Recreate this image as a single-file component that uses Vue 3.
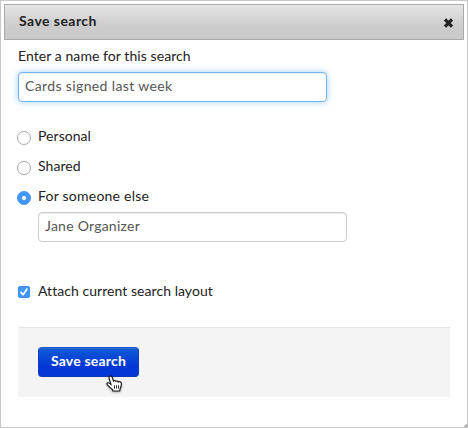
<script setup>
import { ref } from 'vue'

const searchName = ref('Cards signed last week')
const owner = ref('Jane Organizer')
const scope = ref('other')
const attachLayout = ref(true)
const scopes = [
  { value: 'personal', label: 'Personal' },
  { value: 'shared', label: 'Shared' },
  { value: 'other', label: 'For someone else' },
]
</script>

<template>
  <div class="dialog">
    <header class="titlebar">
      <span class="title">Save search</span>
      <button class="close" type="button" aria-label="Close">
        <svg width="11" height="10" viewBox="0 0 11 10">
          <path d="M2 1.4 9 8.6M9 1.4 2 8.6" stroke="#222" stroke-width="3.2" fill="none" />
        </svg>
      </button>
    </header>

    <main class="content">
      <label class="name-label" for="name">Enter a name for this search</label>
      <input id="name" v-model="searchName" class="field focused" type="text" />

      <div class="scopes">
        <label v-for="s in scopes" :key="s.value" class="option" :class="s.value">
          <input v-model="scope" type="radio" class="radio" :value="s.value" />
          <span>{{ s.label }}</span>
        </label>
      </div>
      <input v-model="owner" class="field owner" type="text" />

      <label class="attach">
        <span class="check">
          <input v-model="attachLayout" type="checkbox" class="box" />
          <svg v-if="attachLayout" class="tick" width="12" height="12" viewBox="0 0 12 12">
            <path d="M3 6.4 5.1 8.7 9 3.1" stroke="#fff" stroke-width="1.7" fill="none" stroke-linecap="round" stroke-linejoin="round" />
          </svg>
        </span>
        <span class="attach-text">Attach current search layout</span>
      </label>

      <footer class="footer">
        <button class="save" type="button">Save search</button>
        <svg class="pointer" width="17" height="18" viewBox="0 0 17 18">
          <path d="M3.5 1.6C4.5.5 5.8 1.2 6.2 2.4L7.5 6.1C8.2 5.2 9.4 5.4 9.8 6.4 10.6 5.6 11.9 5.9 12.2 7 13.2 6.2 15.2 6.8 15.3 8.4 15.5 10.5 15 12 14.2 13.5L13.8 16H6.8L6.5 14.6C5 13.5 3.2 11.8 1.2 9.6.3 8.3 1.8 7.3 3.1 8.1L5 9.4 3.2 3.6C3 2.8 3 2.1 3.5 1.6Z" fill="#fff" stroke="#111" stroke-width="1.1" />
          <path d="M8.5 10.3V13.6M10.5 10.3V13.6M12.5 10.3V13.6" stroke="#111" stroke-width=".9" />
        </svg>
      </footer>
    </main>
    <svg class="grip" width="3" height="3" viewBox="0 0 3 3">
      <path d="M2 0h1v3H0V2h1V1h1z" fill="#aaa" />
    </svg>
  </div>
</template>

<style>
body {
  background: #c9c9c9;
}
</style>

<style scoped>
.dialog,
.dialog * {
  box-sizing: border-box;
}
.dialog {
  position: relative;
  width: 468px;
  height: 428px;
  padding: 3px 3px 0;
  border: 1px solid #c8c8c8;
  border-radius: 2px;
  background: #fff;
  color: #222;
  font: 14px/20px Lato, 'Liberation Sans', sans-serif;
}
.titlebar {
  display: flex;
  align-items: center;
  justify-content: space-between;
  width: 460px;
  height: 36px;
  padding: 0 9px 0 14px;
  border: 1px solid #aaa;
  background: linear-gradient(#e4e4e4, #ccc 65%, #cacaca);
}
.title {
  margin-top: -3px;
  font-weight: 700;
  letter-spacing: 0.45px;
}
.close {
  display: flex;
  margin-top: 1px;
  padding: 0;
  border: 0;
  background: none;
}
.content {
  display: flex;
  flex-direction: column;
  align-items: flex-start;
  padding: 6px 14px 0;
}
.name-label {
  height: 26px;
  letter-spacing: 0.07px;
}
.field {
  width: 309px;
  height: 30px;
  padding: 0 6px 3px;
  border: 1px solid #ccc;
  border-radius: 4px;
  outline: 0;
  background: #fff;
  box-shadow: inset 0 1px 1px rgba(0, 0, 0, 0.075);
  color: #555;
  font: inherit;
  letter-spacing: 0.25px;
}
.focused {
  border-color: #70b4f5;
  box-shadow: inset 0 1px 1px rgba(0, 0, 0, 0.06), 0 0 7px rgba(102, 175, 233, 0.6);
  letter-spacing: 0.37px;
}
.scopes {
  display: flex;
  flex-direction: column;
  gap: 10px;
  margin: 24px 0 0 -1px;
}
.option {
  display: flex;
  height: 20px;
  letter-spacing: 0.05px;
}
.option.other {
  letter-spacing: 0.23px;
}
.radio {
  appearance: none;
  width: 14px;
  height: 14px;
  margin: 5px 7px 0 0;
  border: 1px solid #aaa;
  border-radius: 50%;
  background: #fff;
}
.radio:checked {
  border-color: #3b91fa;
  background: radial-gradient(circle, #fff 1.6px, #4297ff 2.5px);
}
.owner {
  margin: 6px 0 0 20px;
}
.attach {
  display: flex;
  height: 20px;
  margin-top: 39px;
}
.check {
  position: relative;
  width: 12px;
  height: 12px;
  margin: 5px 8px 0 0;
}
.box {
  display: block;
  appearance: none;
  width: 12px;
  height: 12px;
  margin: 0;
  border: 1px solid #aaa;
  border-radius: 2px;
}
.box:checked {
  border-color: #3b91fa;
  background: #4297ff;
}
.tick {
  position: absolute;
  inset: 0;
}
.attach-text {
  letter-spacing: 0.05px;
}
.footer {
  position: relative;
  width: 432px;
  height: 70px;
  margin-top: 26px;
  padding: 19px 20px;
  border-top: 1px solid #e5e5e5;
  background: #f4f4f4;
}
.save {
  display: block;
  width: 101px;
  height: 30px;
  padding: 0 0 2px;
  border: 1px solid #0a44c0;
  border-color: #1457cb #0841c8 #0534b5;
  border-radius: 4px;
  background: linear-gradient(#105bd6, #0338d6 65%);
  box-shadow: inset 0 1px 0 rgba(255, 255, 255, 0.1);
  color: #fff;
  font: 700 14px/20px Lato, 'Liberation Sans', sans-serif;
  letter-spacing: 0.2px;
}
.pointer {
  position: absolute;
  top: 47px;
  left: 88px;
  filter: drop-shadow(0 1px 1px rgba(0, 0, 0, 0.3));
}
.grip {
  position: absolute;
  right: 0;
  bottom: 0;
}
</style>
